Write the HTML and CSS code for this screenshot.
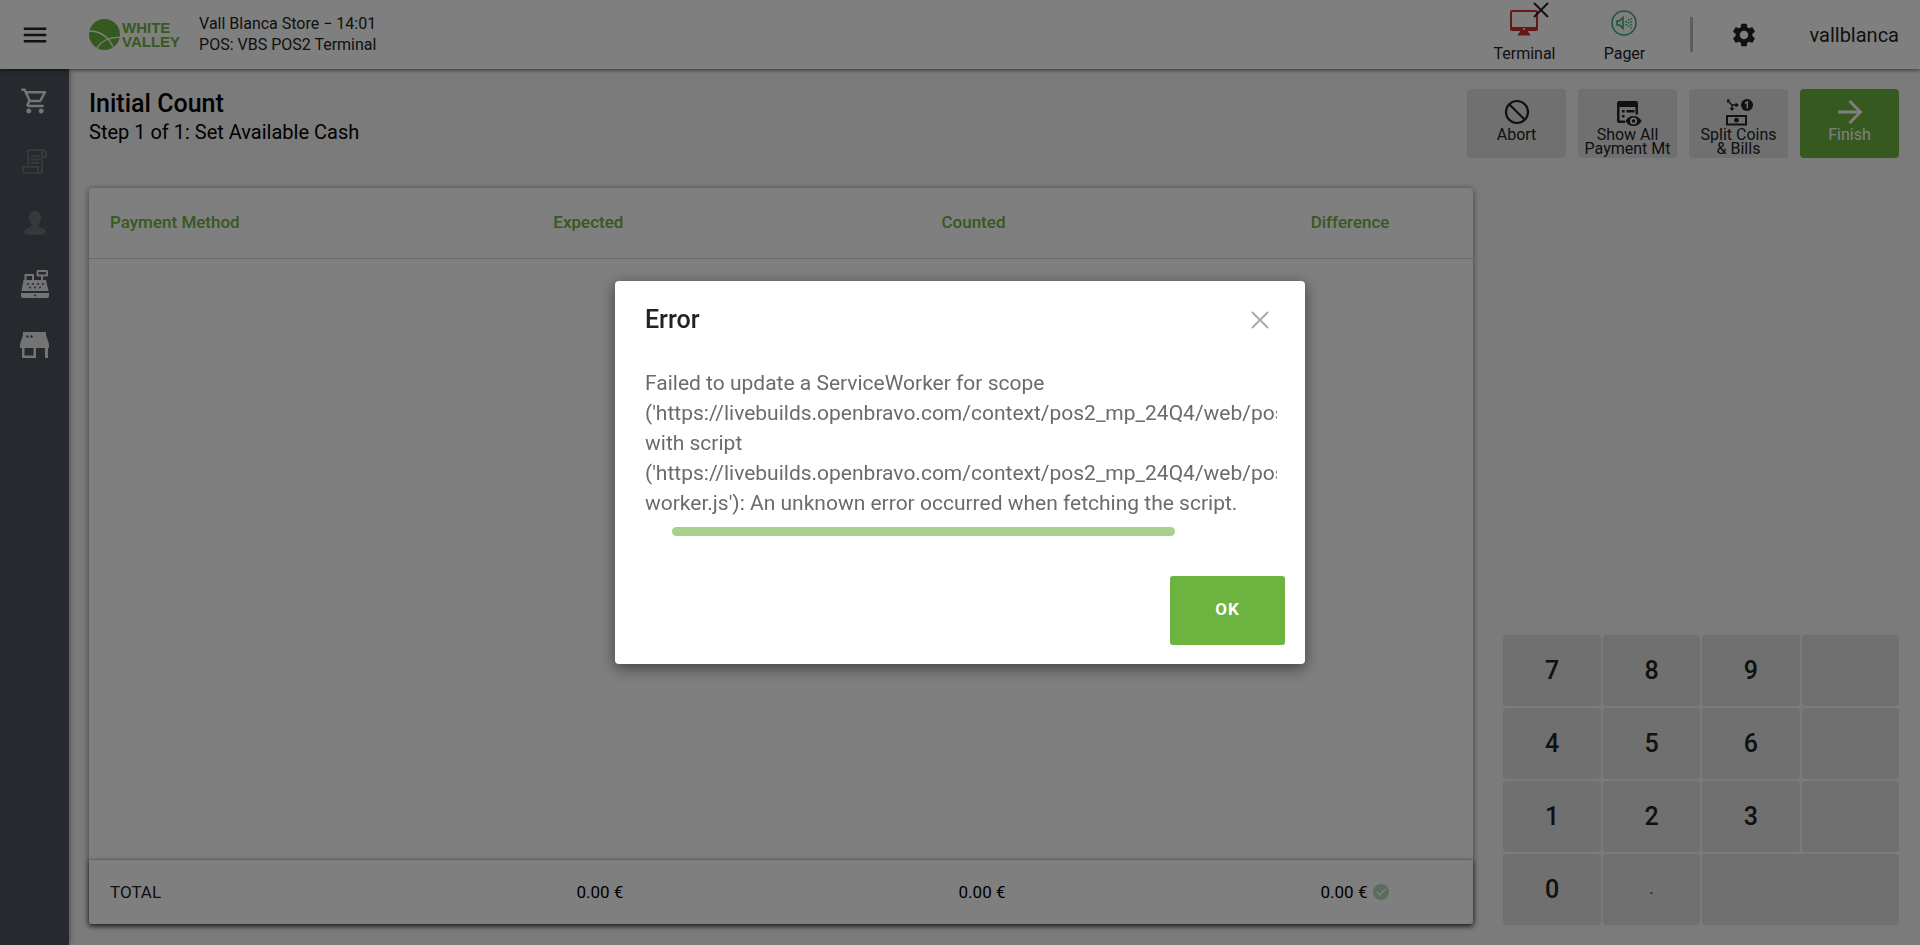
FILE: index.html
```
<!DOCTYPE html>
<html lang="en">
<head>
    <meta charset="UTF-8">
    <meta name="viewport" content="width=device-width, initial-scale=1.0">
    <title>Initial Count - POS</title>
    <link rel="stylesheet" href="styles.css">
</head>
<body>
    <!-- Top bar -->
    <header class="topbar">
        <button class="menu-btn" aria-label="Menu">
            <svg width="30" height="30" viewBox="0 0 24 24" fill="currentColor"><path d="M3 18h18v-2H3zm0-5h18v-2H3zm0-7v2h18V6z"/></svg>
        </button>
        <a href="#" class="logo">
            <svg width="31" height="31" viewBox="0 0 31 31">
                <circle cx="15.500" cy="15.500" r="15.500" fill="#6db33f"/>
                <path d="M0 12C10 12 19 17 24 28" fill="none" stroke="#fff" stroke-width="1.300"/>
                <path d="M8 29C13 21 21 18 31 18.500" fill="none" stroke="#fff" stroke-width="1.300"/>
            </svg>
            <span>WHITE<br>VALLEY</span>
        </a>
        <div class="store-info">
            <div>Vall Blanca Store − 14:01</div>
            <div>POS: VBS POS2 Terminal</div>
        </div>
        <div class="status">
            <button class="status-item">
                <svg width="28" height="26" viewBox="0 0 28 26" fill="#cc2f2f">
                    <path fill-rule="evenodd" d="M2 0h24a2 2 0 0 1 2 2v17a2 2 0 0 1-2 2h-8l1 2.500h1v2H8v-2h1L10 21H2a2 2 0 0 1-2-2V2a2 2 0 0 1 2-2zm0 2v15h24V2z"/>
                    <circle cx="14" cy="19" r="1" fill="#fff"/>
                </svg>
                <svg class="offline" width="16" height="16" viewBox="0 0 16 16" stroke="#222" stroke-width="2"><path d="M1 1l14 14M15 1L1 15"/></svg>
                <span>Terminal</span>
            </button>
            <button class="status-item">
                <svg width="26" height="26" viewBox="0 0 26 26" fill="none" stroke="#2fae72" stroke-width="1.500">
                    <circle cx="13" cy="13" r="12"/>
                    <path d="M6 11h2.500l3.500-3.500v11L8.500 15H6z"/>
                    <path d="M15 11v5M17.500 9v9M20 8v11" stroke-dasharray="1.500 1.500"/>
                </svg>
                <span>Pager</span>
            </button>
        </div>
        <div class="divider"></div>
        <button class="settings-btn" aria-label="Settings">
            <svg width="28" height="28" viewBox="0 0 24 24" fill="currentColor"><path d="M19.140 12.940c.04-.3.06-.61.06-.94 0-.32-.02-.64-.07-.94l2.030-1.580c.18-.14.23-.41.12-.61l-1.920-3.320c-.12-.22-.37-.29-.59-.22l-2.390.96c-.5-.38-1.030-.7-1.620-.94l-.36-2.540c-.04-.24-.24-.41-.48-.41h-3.840c-.24 0-.43.17-.47.41l-.36 2.540c-.59.24-1.130.57-1.620.94l-2.390-.96c-.22-.08-.47 0-.59.22L2.740 8.870c-.12.21-.08.47.12.61l2.030 1.580c-.05.3-.09.63-.09.94s.02.64.07.94l-2.030 1.580c-.18.14-.23.41-.12.61l1.920 3.320c.12.22.37.29.59.22l2.390-.96c.5.38 1.030.7 1.620.94l.36 2.540c.05.24.24.41.48.41h3.840c.24 0 .44-.17.47-.41l.36-2.540c.59-.24 1.130-.56 1.620-.94l2.390.96c.22.08.47 0 .59-.22l1.920-3.320c.12-.22.07-.47-.12-.61zM12 15.600c-1.980 0-3.600-1.620-3.600-3.600s1.620-3.600 3.600-3.600 3.600 1.620 3.600 3.600-1.620 3.600-3.600 3.600z"/></svg>
        </button>
        <a href="#" class="user">vallblanca</a>
    </header>

    <div class="layout">
        <!-- Side navigation -->
        <nav class="sidebar">
            <a href="#" aria-label="Sales">
                <svg width="30" height="30" viewBox="0 0 24 24" fill="currentColor"><path d="M15.550 13c.75 0 1.410-.41 1.750-1.030l3.580-6.490c.37-.66-.11-1.480-.87-1.480H5.210l-.94-2H1v2h2l3.600 7.590-1.350 2.440C4.520 15.370 5.480 17 7 17h12v-2H7l1.100-2zM6.160 6h12.150l-2.760 5H8.530zM7 18c-1.100 0-1.990.9-1.990 2S5.900 22 7 22s2-.9 2-2-.9-2-2-2m10 0c-1.100 0-1.990.9-1.990 2s.89 2 1.990 2 2-.9 2-2-.9-2-2-2"/></svg>
            </a>
            <a href="#" class="disabled" aria-label="Tickets">
                <svg width="25" height="25" viewBox="0 0 25 25" fill="none" stroke="currentColor" stroke-width="2">
                    <path d="M6 18V3.500A2.500 2.500 0 0 1 8.500 1H21a3 3 0 0 1 3 3v4h-4"/>
                    <path d="M22 1a3 3 0 0 0-2 3v18a2 2 0 0 1-2 2H3.500A2.500 2.500 0 0 1 1 21.500V18h15v3.500a2.500 2.500 0 0 0 2 2.500"/>
                    <path d="M8.500 7h9M8.500 10.500h9M8.500 14h9"/>
                </svg>
            </a>
            <a href="#" class="disabled" aria-label="Customers">
                <svg width="22" height="24" viewBox="0 0 22 24" fill="currentColor"><path d="M11 0c4 0 6 3 6 6.500 0 3-1.200 5-2.500 6.500-.6 1.500 0 2.500 1.500 3.200 3 1 6 2 6 4.800 0 2-4 3-11 3S0 23 0 21c0-2.800 3-3.800 6-4.800 1.500-.7 2.100-1.700 1.500-3.200C6.200 11.500 5 9.500 5 6.500 5 3 7 0 11 0z"/></svg>
            </a>
            <a href="#" aria-label="Cash management">
                <svg width="28" height="28" viewBox="0 0 28 28" fill="currentColor">
                    <path fill-rule="evenodd" d="M15.500 1.500A1.500 1.500 0 0 1 17 0h8.500A1.500 1.500 0 0 1 27 1.500V5a1.500 1.500 0 0 1-1.500 1.500H22V10h3l2.500 11H0.500L2.500 10H3.500V4H13v6h7V6.500h-3A1.500 1.500 0 0 1 15.500 5zm2 .5v2.500H25V2zM5.500 6v4H11V6z"/>
                    <path d="M0 23h28v3a2 2 0 0 1-2 2H2a2 2 0 0 1-2-2z"/>
                    <g fill="#4c525c"><circle cx="7" cy="14" r="1"/><circle cx="12" cy="14" r="1"/><circle cx="17" cy="14" r="1"/><circle cx="22" cy="14" r="1"/><circle cx="9" cy="17.500" r="1"/><circle cx="14" cy="17.500" r="1"/><circle cx="19" cy="17.500" r="1"/><circle cx="14" cy="25.500" r="1"/></g>
                </svg>
            </a>
            <a href="#" aria-label="Store">
                <svg width="29" height="26" viewBox="0 0 29 26" fill="currentColor">
                    <path fill-rule="evenodd" d="M3 0h23v3l3 9v4h-1v10h-3V16h-9v10H2V16H0v-4l3-9zM4.500 16v7.500h9V16z"/>
                    <g fill="#4c525c"><circle cx="7.500" cy="4.500" r="1.200"/><circle cx="11.500" cy="4.500" r="1.200"/></g>
                </svg>
            </a>
        </nav>

        <main class="content">
            <div class="page-head">
                <div>
                    <h1>Initial Count</h1>
                    <p>Step 1 of 1: Set Available Cash</p>
                </div>
                <div class="actions">
                    <button class="action">
                        <svg width="30" height="30" viewBox="0 0 30 30" fill="none" stroke="currentColor" stroke-width="2.200"><circle cx="15" cy="14" r="11"/><path d="M7.200 6.200l15.600 15.600"/></svg>
                        <span>Abort</span>
                    </button>
                    <button class="action">
                        <svg width="30" height="30" viewBox="0 0 30 30" fill="currentColor">
                            <path fill-rule="evenodd" d="M6 3h17a2 2 0 0 1 2 2v11.500h-2.500V9H6.500v13.500H12V25H6a2 2 0 0 1-2-2V5a2 2 0 0 1 2-2z"/>
                            <path d="M9 12h2.500v2.500H9zM13.500 12h8v2.500h-8zM9 17h2.500v2.500H9z"/>
                            <path fill-rule="evenodd" d="M20.500 18c3.600 0 6.600 2 8 5-1.400 3-4.400 5-8 5s-6.600-2-8-5c1.400-3 4.400-5 8-5zm0 1.500a3.500 3.500 0 1 0 0 7 3.500 3.500 0 0 0 0-7zm0 1.700a1.800 1.800 0 1 1 0 3.600 1.800 1.800 0 0 1 0-3.600z"/>
                        </svg>
                        <span>Show All Payment Mt</span>
                    </button>
                    <button class="action">
                        <svg width="30" height="30" viewBox="0 0 30 30" fill="none" stroke="currentColor" stroke-width="2">
                            <path d="M4 3l4 4v4M8 7h4" stroke-width="1.500"/>
                            <path d="M3 1.500h3.500L3 5zM11.500 4.500l3.500 2.500-3.500 2.500zM5.500 10h5L8 13z" fill="currentColor" stroke="none"/>
                            <circle cx="23" cy="7" r="6" fill="currentColor" stroke="none"/>
                            <path d="M21 5.200l2.300-1.200v6.500" stroke="#e0e0e0" stroke-width="1.600"/>
                            <path d="M3 18h19v8.500H3z"/>
                            <circle cx="12.500" cy="22.200" r="2.400" fill="currentColor" stroke="none"/>
                        </svg>
                        <span>Split Coins &amp; Bills</span>
                    </button>
                    <button class="action primary">
                        <svg width="30" height="30" viewBox="0 0 30 30" fill="none" stroke="currentColor" stroke-width="3"><path d="M3 14h22M14.500 3L25.500 14l-11 11"/></svg>
                        <span>Finish</span>
                    </button>
                </div>
            </div>

            <div class="workspace">
                <table class="count-table">
                    <thead>
                        <tr>
                            <th class="col-method">Payment Method</th>
                            <th class="col-amount">Expected</th>
                            <th class="col-amount">Counted</th>
                            <th class="col-diff">Difference</th>
                        </tr>
                    </thead>
                    <tbody>
                        <tr><td colspan="4"></td></tr>
                    </tbody>
                    <tfoot>
                        <tr>
                            <td class="col-method">TOTAL</td>
                            <td class="col-amount">0.00 €</td>
                            <td class="col-amount">0.00 €</td>
                            <td class="col-diff">
                                <div class="diff">
                                    0.00 €
                                    <svg width="16" height="16" viewBox="0 0 16 16"><circle cx="8" cy="8" r="8" fill="#b5d9b8"/><path d="M4 8l3 3 5.500-6" fill="none" stroke="#fff" stroke-width="1.500"/></svg>
                                </div>
                            </td>
                        </tr>
                    </tfoot>
                </table>

                <!-- Numeric keypad -->
                <div class="keypad">
                    <button>7</button>
                    <button>8</button>
                    <button>9</button>
                    <button disabled></button>
                    <button>4</button>
                    <button>5</button>
                    <button>6</button>
                    <button disabled></button>
                    <button>1</button>
                    <button>2</button>
                    <button>3</button>
                    <button disabled></button>
                    <button>0</button>
                    <button class="key-dot">.</button>
                    <button class="key-wide" disabled></button>
                </div>
            </div>
        </main>
    </div>

    <!-- Error dialog -->
    <div class="backdrop">
        <div class="modal" role="dialog" aria-modal="true" aria-labelledby="errorTitle">
            <div class="modal-head">
                <h2 id="errorTitle">Error</h2>
                <button class="close-btn" aria-label="Close">
                    <svg width="18" height="18" viewBox="0 0 18 18" stroke="currentColor" stroke-width="2"><path d="M1 1l16 16M17 1L1 17"/></svg>
                </button>
            </div>
            <div class="modal-body">
                <p>Failed to update a ServiceWorker for scope ('https://livebuilds.openbravo.com/context/pos2_mp_24Q4/web/pos/') with script ('https://livebuilds.openbravo.com/context/pos2_mp_24Q4/web/pos/service-worker.js'): An unknown error occurred when fetching the script.</p>
                <div class="scroll-track"><div class="scroll-thumb"></div></div>
            </div>
            <div class="modal-foot">
                <button class="ok-btn">OK</button>
            </div>
        </div>
    </div>
</body>
</html>
```
FILE: styles.css
```
:root {
    --primary: #6db33f;
    --dark: #222;
    --grey: #e0e0e0;
    --sidebar: #4c525c;
}

* {
    margin: 0;
    padding: 0;
    box-sizing: border-box;
}

body {
    min-height: 100vh;
    display: flex;
    flex-direction: column;
    background: #f7f7f7;
    color: var(--dark);
    font-family: Roboto, "Liberation Sans", sans-serif;
    font-size: 16px;
}

button {
    border: none;
    background: none;
    color: inherit;
    font: inherit;
    cursor: pointer;
}

a {
    color: inherit;
    text-decoration: none;
}

svg {
    display: block;
    flex: none;
}

/* Top bar */
.topbar {
    position: relative;
    z-index: 2;
    height: 69px;
    display: flex;
    align-items: center;
    padding-right: 21px;
    background: white;
    box-shadow: 0 1px 4px rgba(0,0,0,0.6);
}

.menu-btn {
    width: 69px;
    display: flex;
    justify-content: center;
}

.logo {
    display: flex;
    align-items: center;
    gap: 2px;
    margin-left: 20px;
    color: var(--primary);
    font: bold 15px/14px "Liberation Sans", sans-serif;
}

.store-info {
    margin-left: 19px;
    padding-bottom: 2px;
    line-height: 21px;
}

.status {
    display: flex;
    margin-left: auto;
}

.status-item {
    position: relative;
    width: 100px;
    height: 69px;
    padding-top: 10px;
    display: flex;
    flex-direction: column;
    align-items: center;
    justify-content: flex-start;
    gap: 8px;
}

.offline {
    position: absolute;
    top: 2px;
    left: 59px;
}

.divider {
    width: 3px;
    height: 35px;
    margin-left: 16px;
    background: #bdbdbd;
}

.settings-btn {
    margin: 0 51px 0 37px;
}

.user {
    font-size: 20px;
}

/* Side navigation */
.layout {
    flex: 1;
    display: flex;
}

.sidebar {
    width: 69px;
    padding-top: 1px;
    background: var(--sidebar);
    box-shadow: 0 0 6px rgba(0,0,0,0.5);
}

.sidebar a {
    height: 61px;
    display: flex;
    align-items: center;
    justify-content: center;
    color: #e8e8e8;
}

.sidebar .disabled {
    color: #6c7279;
}

/* Content */
.content {
    flex: 1;
    display: flex;
    flex-direction: column;
    padding: 20px 21px 20px 20px;
}

.page-head {
    display: flex;
    justify-content: space-between;
    margin-bottom: 30px;
    color: black;
}

.page-head h1 {
    font-size: 25px;
    font-weight: 500;
    line-height: 29px;
}

.page-head p {
    font-size: 20px;
    line-height: 28px;
}

.actions {
    display: flex;
    gap: 12px;
}

.action {
    width: 99px;
    height: 69px;
    padding: 9px 6px 0;
    display: flex;
    flex-direction: column;
    align-items: center;
    border-radius: 4px;
    background: var(--grey);
    color: var(--dark);
    line-height: 14px;
}

.action.primary {
    background: var(--primary);
    color: white;
}

.workspace {
    flex: 1;
    display: grid;
    grid-template-columns: 7fr 2fr;
    gap: 30px;
}

/* Count table */
.count-table {
    width: 100%;
    margin-bottom: 1px;
    table-layout: fixed;
    border-spacing: 0;
    border-radius: 4px;
    background: white;
    box-shadow: 0 1px 6px rgba(0,0,0,0.5);
    font-size: 17px;
    white-space: nowrap;
}

.count-table th {
    height: 71px;
    padding-bottom: 2px;
    border-bottom: 1px solid #d0d0d0;
    color: var(--primary);
    font-weight: 500;
    text-align: right;
}

.count-table tfoot {
    box-shadow: 0 2px 5px rgba(0,0,0,0.6);
}

.count-table tfoot td {
    height: 65px;
    border-top: 1px solid #c8c8c8;
    color: black;
    text-align: right;
}

.count-table .col-method {
    width: 11%;
    padding-left: 21px;
    color: var(--dark);
    text-align: left;
}

.count-table th.col-method {
    color: var(--primary);
}

.count-table .col-amount {
    width: 27.6%;
}

.count-table .col-diff {
    padding-right: 84px;
}

.diff {
    display: flex;
    align-items: center;
    justify-content: flex-end;
    gap: 6px;
}

/* Keypad */
.keypad {
    align-self: end;
    display: grid;
    grid-template-columns: repeat(4, 1fr);
    grid-auto-rows: 71px;
    gap: 2px;
}

.keypad button {
    border-radius: 3px;
    background: var(--grey);
    font-size: 25px;
    font-weight: 500;
}

.keypad .key-dot {
    font-size: 12px;
}

.keypad .key-wide {
    grid-column: span 2;
}

/* Error dialog */
.backdrop {
    position: fixed;
    inset: 0;
    z-index: 10;
    display: flex;
    align-items: center;
    justify-content: center;
    background: rgba(0,0,0,0.5);
}

.modal {
    width: 690px;
    max-width: 90%;
    border-radius: 4px;
    background: white;
    box-shadow: 0 4px 16px rgba(0,0,0,0.5);
}

.modal-head {
    display: flex;
    align-items: center;
    justify-content: space-between;
    padding: 24px 36px 24px 30px;
}

.modal-head h2 {
    font-size: 25px;
    font-weight: 500;
    line-height: 30px;
}

.close-btn {
    color: #aaa;
}

.modal-body {
    padding: 9px 28px 19px 30px;
    color: #6b6b6b;
    font-size: 21px;
    line-height: 30px;
}

.modal-body p {
    overflow: hidden;
}

.scroll-track {
    padding: 9px 27px 11px;
}

.scroll-thumb {
    width: 87%;
    height: 9px;
    border-radius: 5px;
    background: #a7d18c;
}

.modal-foot {
    display: flex;
    justify-content: flex-end;
    padding: 10px 20px 19px;
}

.ok-btn {
    width: 115px;
    height: 69px;
    padding-bottom: 3px;
    border-radius: 3px;
    background: var(--primary);
    color: white;
    font-size: 17px;
    font-weight: 700;
    letter-spacing: 1px;
}
```
